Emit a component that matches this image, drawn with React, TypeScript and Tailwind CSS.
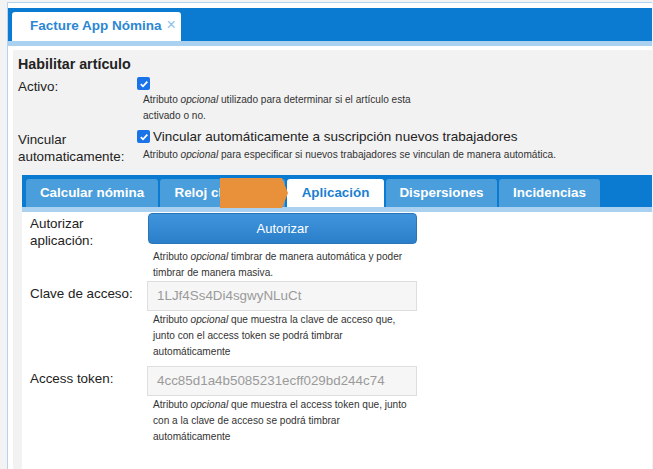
import React from "react";

const font = { fontFamily: '"Liberation Sans", Arial, sans-serif' };

function Check() {
  return (
    <span className="flex h-[13px] w-[13px] shrink-0 items-center justify-center rounded-[2px] bg-[#1a73e8]">
      <svg width="10" height="10" viewBox="0 0 10 10">
        <path d="M1.8 5.2 L4 7.3 L8.3 2.6" fill="none" stroke="white" strokeWidth="1.8" />
      </svg>
    </span>
  );
}

function Help({ children }: { children: React.ReactNode }) {
  return <div className="whitespace-nowrap text-[10.1px] leading-[16px] text-[#333]">{children}</div>;
}

function Op() {
  return <i>opcional</i>;
}

// pestañas internas
const tabs = [
  { label: "Calcular nómina", w: "w-[132px]" },
  { label: "Reloj checador", w: "w-[125px]" },
  { label: "Aplicación", w: "w-[97px]", active: true },
  { label: "Dispersiones", w: "w-[111px]" },
  { label: "Incidencias", w: "w-[101px]" },
];

const rows = [
  {
    label: "Clave de acceso:",
    value: "1LJf4Ss4Di4sgwyNLuCt",
    help: ["que muestra la clave de acceso que,", "junto con el access token se podrá timbrar", "automáticamente"],
    mt: "mt-0",
  },
  {
    label: "Access token:",
    value: "4cc85d1a4b5085231ecff029bd244c74",
    help: ["que muestra el access token que, junto", "con a la clave de acceso se podrá timbrar", "automáticamente"],
    mt: "mt-[3px]",
  },
];

export default function App() {
  return (
    <div className="h-[469px] w-[653px] overflow-hidden bg-[#f3f3f3] pt-[2px]" style={font}>
      <div className="ml-[7px] h-[470px] w-[645px] border-l border-t border-[#b3d4ee] bg-white pt-[5px]">
        {/* cabecera */}
        <div className="flex h-[33px] items-end bg-[#0a7bd0] pl-[4px]">
          <div className="flex h-[29px] w-[169px] items-center whitespace-nowrap rounded-t-[3px] bg-white pl-[18px]">
            <span className="text-[13.5px] font-bold text-[#2b87d3]">Facture App Nómina</span>
            <span className="-mt-[4px] ml-[5px] text-[16px] leading-none text-[#8dc1ea]">×</span>
          </div>
        </div>
        <div className="h-[5px] bg-[#aad1ef]" />

        {/* panel */}
        <div className="ml-[5px] mt-[4px] h-[420px] bg-[#f2f2f2] pl-[5px] pt-[6px] text-[#222]">
          <div className="text-[14.3px] font-bold leading-[17px]">Habilitar artículo</div>

          <div className="mt-[4px] flex">
            <div className="w-[119px] pt-[1px] text-[13.4px] leading-[17px]">Activo:</div>
            <div>
              <Check />
              <div className="ml-[6px] mt-[2px]">
                <Help>
                  Atributo <Op /> utilizado para determinar si el artículo esta
                  <br />
                  activado o no.
                </Help>
              </div>
            </div>
          </div>

          <div className="mt-[4px] flex">
            <div className="w-[119px] pt-[3px] text-[13.4px] leading-[17px]">
              Vincular
              <br />
              automaticamente:
            </div>
            <div>
              <div className="flex h-[17px] items-center gap-[3px]">
                <Check />
                <span className="whitespace-nowrap text-[13.5px] leading-[17px]">
                  Vincular automáticamente a suscripción nuevos trabajadores
                </span>
              </div>
              <div className="ml-[6px] mt-[2px]">
                <Help>
                  Atributo <Op /> para especificar si nuevos trabajadores se vinculan de manera automática.
                </Help>
              </div>
            </div>
          </div>

          {/* pestañas */}
          <div className="relative ml-[4px] mt-[10px]">
            <div className="flex h-[32px] items-end gap-[2px] bg-[#0a7bd0] pl-[4px]">
              {tabs.map((t) => (
                <div
                  key={t.label}
                  className={`${t.w} flex h-[28px] items-center justify-center whitespace-nowrap rounded-t-[3px] text-[13.4px] font-bold ${
                    t.active ? "bg-white text-[#1a7fd0]" : "bg-[#4a9edc] text-white"
                  }`}
                >
                  {t.label}
                </div>
              ))}
            </div>
            <div className="h-[5px] bg-[#aad1ef]" />
            <svg className="absolute left-[198px] top-[3px]" width="68" height="30" viewBox="0 0 68 30">
              <path d="M0 0 H62 L68 15 L62 30 H0 Z" fill="#e8913a" />
            </svg>

            {/* contenido */}
            <div className="h-[260px] bg-white pl-[8px] text-[#222]">
              <div className="flex">
                <div className="w-[117px] pt-[3px] text-[13.4px] leading-[17px]">
                  Autorizar
                  <br />
                  aplicación:
                </div>
                <div>
                  <button
                    type="button"
                    className="ml-[1px] mt-[1px] block h-[31px] w-[269px] rounded-[4px] border border-[#2a74b8] bg-gradient-to-b from-[#3f95dc] to-[#2b7fca] text-[13px] text-white"
                  >
                    Autorizar
                  </button>
                  <div className="ml-[6px] mt-[5px]">
                    <Help>
                      Atributo <Op /> timbrar de manera automática y poder
                      <br />
                      timbrar de manera masiva.
                    </Help>
                  </div>
                </div>
              </div>

              {rows.map((r) => (
                <div key={r.label} className={`${r.mt} flex`}>
                  <div className="w-[117px] pt-[4px] text-[13.4px] leading-[17px]">{r.label}</div>
                  <div>
                    <div className="flex h-[30px] w-[270px] items-center border border-[#dedede] bg-[#f6f6f6] pl-[9px] text-[13.4px] text-[#9a9a9a]">
                      {r.value}
                    </div>
                    <div className="mb-[3px] ml-[6px] mt-[1px]">
                      <Help>
                        Atributo <Op /> {r.help[0]}
                        <br />
                        {r.help[1]}
                        <br />
                        {r.help[2]}
                      </Help>
                    </div>
                  </div>
                </div>
              ))}
            </div>
          </div>
        </div>
      </div>
    </div>
  );
}
